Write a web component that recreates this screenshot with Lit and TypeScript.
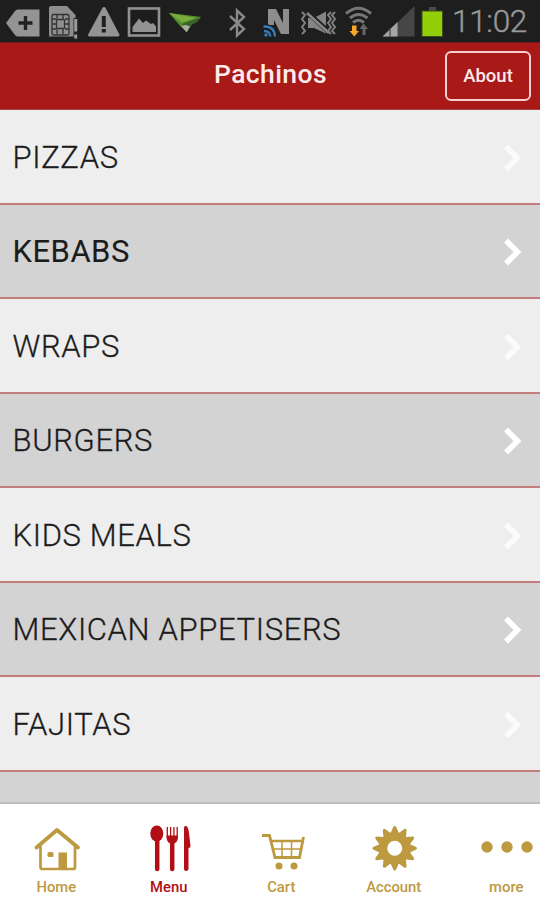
import { LitElement, html, css, svg } from "lit";
import { customElement } from "lit/decorators.js";
import { classMap } from "lit/directives/class-map.js";

type Row = { label: string; pressed?: boolean };

const rows: Row[] = [
  { label: "PIZZAS" },
  { label: "KEBABS", pressed: true },
  { label: "WRAPS" },
  { label: "BURGERS" },
  { label: "KIDS MEALS" },
  { label: "MEXICAN APPETISERS" },
  { label: "FAJITAS" },
  { label: "" },
];

// Status icons share one coordinate space; each tile shows its own slice.
const statusIcons = [
  { x: 0, w: 42, art: svg`<path d="M6 23 L15 11 Q16 9.500 18 9.500 H39.500 V36.500 H18 Q16 36.500 15 35Z" fill="#949494"/><path d="M18.500 23H32.500M25.500 16V30" stroke="#222" stroke-width="3.400"/>` },
  { x: 42, w: 42, art: svg`<path d="M51 6H67L75.500 15V36.500H49V8Q49 6 51 6Z" fill="#8e8e8e"/><g fill="none" stroke="#333" stroke-width="1.300"><rect x="52" y="14.500" width="17" height="20.500" rx="1.500"/><rect x="56.500" y="19.500" width="8" height="9" rx="1"/><path d="M52 19h4M52 24h4M52 29h4M65 19h4M65 24h4M65 29h4M57 15v4M63 15v4M57 29v5M63 29v5"/></g><path d="M73.500 18H78V39H73.500Z" fill="#222"/><path d="M75.700 19V31.500M75.700 34.500V38.500" stroke="#999" stroke-width="3"/>` },
  { x: 84, w: 40, art: svg`<path d="M102.300 8.200Q104 5.800 105.700 8.200L119.300 34.300Q120 36.500 117.500 36.500H90Q87.300 36.500 88.300 34.300Z" fill="#949494"/><path d="M103.800 16V27M103.800 29V32.500" stroke="#202020" stroke-width="4"/>` },
  { x: 124, w: 41, art: svg`<rect x="129" y="8.500" width="30" height="27" fill="#1d1d1d" stroke="#929292" stroke-width="2.600"/><path d="M132.500 32V27L139 18.500L143 23L146 20.500L151 24L153 23L156 26.500V32Z" fill="#929292"/>` },
  { x: 165, w: 50, art: svg`<path d="M169 13L201.500 17L181 27Z" fill="#568e2d"/><path d="M169 13L196 18L182 22.500Z" fill="#76ad3e"/><path d="M181 26L187 32.500L192 24.500L197 22L201.500 17L184 23Z" fill="#3b6428"/><path d="M181 26L186.500 32.300L190 26.500L186 25Z" fill="#a9b1a6"/>` },
  { x: 215, w: 40, art: svg`<path d="M230 16L244 29L237 35.500V10.500L244 17L230 30" fill="none" stroke="#898989" stroke-width="2.400"/>` },
  { x: 255, w: 40, art: svg`<path d="M268 9H276L283 23V9H289V34H281L274 20V25H268Z" fill="#8d8d8d"/><path d="M263 26.500Q274 26 275 37M263 31Q270 30.500 270.500 37" fill="none" stroke="#1c1c1c" stroke-width="5"/><path d="M263.500 26.500Q274.500 26 275 36.500M264 31Q270 31 270.500 36.500" fill="none" stroke="#387ab5" stroke-width="2.300"/><circle cx="266" cy="35" r="1.800" fill="#387ab5"/>` },
  { x: 295, w: 45, art: svg`<path d="M308 18H314L326 11.500V33.500L314 28H308Z" fill="#848484"/><path d="M307 12L330 33" stroke="#202020" stroke-width="5"/><path d="M307 13L329 33" stroke="#888" stroke-width="2.500"/><g fill="none" stroke="#818181" stroke-width="2"><path d="M302 12L305 15L302 19L305 23L302 27L305 31L302 34"/><path d="M331 12L328 15L331 19L328 23L331 27L328 31L331 34M335 12L332 15L335 19L332 23L335 27L332 31L335 34"/></g>` },
  { x: 340, w: 38, art: svg`<g fill="none" stroke="#777" stroke-width="3"><path d="M346 13.500Q358.500 3 371 13.500"/><path d="M350 18Q358.500 11 367.500 18"/><path d="M353 22.500Q358.500 18 364 22.500"/></g><path d="M362.500 35V29H359.500L363.500 23.500L368 29H365.500V35Z" fill="#666"/><path d="M352 25.500H356.500V31H359L354.300 36.500L349.500 31H352Z" fill="#f8a52b"/>` },
  { x: 378, w: 39, art: svg`<path d="M383 36.500L414.500 6V36.500Z" fill="#464646"/><path d="M382.500 36.500L397.500 22V36.500Z" fill="#a5a5a5"/><path d="M390 28V36.500" stroke="#4a4a4a" stroke-width="1.300"/>` },
  { x: 417, w: 32, art: svg`<path d="M429 7H436V11H429Z" fill="#4b4b4b"/><rect x="421.500" y="10.500" width="21.500" height="26.500" fill="#3d4e19"/><rect x="422.500" y="11.500" width="19.500" height="24.500" fill="#93cf06"/>` },
];

// Twelve rounded teeth around a ring.
const gearPath =
  Array.from({ length: 12 }, (_, i) => {
    const pt = (r: number, deg: number) => {
      const a = ((i * 30 + deg - 90) * Math.PI) / 180;
      return `${(394.2 + r * Math.cos(a)).toFixed(2)} ${(848.3 + r * Math.sin(a)).toFixed(2)}`;
    };
    return `${i ? "L" : "M"}${pt(16.2, -14)}L${pt(21.6, -3.5)}Q${pt(23.2, 0)} ${pt(21.6, 3.5)}L${pt(16.2, 14)}`;
  }).join("") + "ZM401.700 848.300a7.500 7.500 0 1 0 -15 0a7.500 7.500 0 1 0 15 0Z";

const tabs = [
  { label: "Home", x: 0, art: svg`<path d="M36.500 847.500L57 830L78 847.500" fill="none" stroke="currentColor" stroke-width="3.800" stroke-linecap="round" stroke-linejoin="round"/><path d="M40.500 846V867Q40.500 869 42.500 869H73.500Q75 869 75 867V846" fill="none" stroke="currentColor" stroke-width="2.700"/><path d="M58.500 852.500H67V868H58.500Z"/><rect x="47.500" y="852" width="6" height="5" rx="1.500"/>` },
  { label: "Menu", x: 112.5, active: true, art: svg`<ellipse cx="156.300" cy="833.500" rx="6.500" ry="8"/><path d="M156.700 838V869M171.700 842V869" stroke="currentColor" stroke-width="4.500" stroke-linecap="round"/><path d="M166.800 827V838M170.100 827V838M173.400 827V838M176.700 827V838" stroke="currentColor" stroke-width="1.300"/><path d="M166.100 835.500H177.400V838Q177 843.500 171.700 843.500T166.100 838Z"/><path d="M183.500 869V828Q183.500 825.500 185.500 826Q188 827 188.500 833L190 846Q190 848 188 848V869Q187.800 871 185.700 871Q183.500 871 183.500 869Z"/>` },
  { label: "Cart", x: 225, art: svg`<g fill="none" stroke="currentColor"><path d="M262 835.500H269.500L275 857.500H299.500L303.500 837" stroke-width="2.800"/><path d="M271.500 841H302" stroke-width="2.500"/><path d="M273 849H300M282 841V857M291.500 841V857" stroke-width="1.500"/></g><circle cx="279" cy="866" r="3.500"/><circle cx="294" cy="866" r="3.500"/>` },
  { label: "Account", x: 337.5, art: svg`<path d="${gearPath}" fill-rule="evenodd"/>` },
  { label: "more", x: 450, art: svg`<circle cx="487" cy="847" r="5.700"/><circle cx="507" cy="847" r="5.700"/><circle cx="527" cy="847" r="5.700"/>` },
];

@customElement("app-root")
export class AppRoot extends LitElement {
  static styles = css`
    :host { display: flex; flex-direction: column; width: 540px; height: 900px; overflow: hidden; font-family: Roboto, sans-serif; background: #eee; }
    svg { display: block; flex: none; }
    .status { display: flex; flex: none; height: 42px; background: #1e1e1e; }
    .clock { color: #999; font-size: 31.5px; font-weight: 300; line-height: 43px; letter-spacing: -0.3px; padding-left: 3px; white-space: nowrap; -webkit-text-stroke: 0.4px currentColor; }
    .header { display: grid; grid-template-columns: 1fr auto 1fr; align-items: center; flex: none; box-sizing: border-box; height: 68px; background: #a81918; border-top: 1px solid #72191b; border-bottom: 1px solid #a34545; color: #fdebea; }
    .title { grid-column: 2; margin: 0; padding: 0 0 4px 1px; font-size: 26.5px; line-height: 30px; font-weight: 500; letter-spacing: 0.4px; }
    .about { justify-self: end; box-sizing: border-box; width: 86px; height: 50px; margin-right: 9px; padding: 0; background: none; border: 2px solid #f3d0cf; border-radius: 6px; color: #fdebea; font: 500 18.5px/46px Roboto, sans-serif; }
    .list { flex: 1; min-height: 0; overflow: hidden; margin: 0; padding: 0; list-style: none; }
    .row { display: flex; align-items: center; justify-content: space-between; box-sizing: border-box; height: 94.5px; padding: 3px 17px 0 12.5px; border-bottom: 2px solid #c27e7c; background: #eee; color: #1c1c1c; }
    .row:nth-child(even) { background: #d3d3d3; }
    .label { font-size: 31px; line-height: 40px; letter-spacing: 0.65px; font-weight: 300; white-space: nowrap; -webkit-text-stroke: 0.3px currentColor; }
    .label.pressed { letter-spacing: 0.5px; font-weight: 400; -webkit-text-stroke-width: 0.1px; }
    .chevron { stroke: #fbfbfb; }
    .row:nth-child(even) .chevron { stroke: #fff; }
    .tabs { display: flex; flex: none; box-sizing: border-box; height: 98px; background: #fff; border-top: 2px solid #bebebe; }
    .tab { display: flex; flex-direction: column; align-items: center; flex: none; width: 112.5px; color: #bd993f; fill: currentColor; font-size: 14.8px; line-height: 20px; font-weight: 500; }
    .tab.active { color: #b10e15; }
  `;

  render() {
    return html`
      <div class="status">
        ${statusIcons.map((s) => html`<svg width=${s.w} height="42" viewBox="${s.x} 0 ${s.w} 42">${s.art}</svg>`)}
        <span class="clock">11:02</span>
      </div>
      <header class="header">
        <h1 class="title">Pachinos</h1>
        <button class="about">About</button>
      </header>
      <ul class="list">
        ${rows.map(
          (r) => html`<li class="row">
            <span class=${classMap({ label: true, pressed: !!r.pressed })}>${r.label}</span>
            <svg width="20" height="30" viewBox="0 0 20 30"><path class="chevron" d="M3 3.500L14.500 15L3 26.500" fill="none" stroke-width="5.500" /></svg>
          </li>`
        )}
      </ul>
      <nav class="tabs">
        ${tabs.map(
          (t) => html`<div class=${classMap({ tab: true, active: !!t.active })}>
            <svg width="112.5" height="73" viewBox="${t.x} 804 112.5 73">${t.art}</svg>
            <span>${t.label}</span>
          </div>`
        )}
      </nav>
    `;
  }
}
